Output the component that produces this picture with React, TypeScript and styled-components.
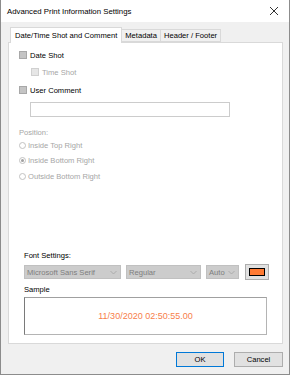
import React from 'react';
import styled, { createGlobalStyle } from 'styled-components';

const GlobalStyle = createGlobalStyle`
  html, body {
    margin: 0;
    padding: 0;
    background: #ffffff;
  }
  * {
    box-sizing: border-box;
  }
`;

const Window = styled.div`
  width: 290px;
  height: 375px;
  display: flex;
  flex-direction: column;
  border: 1px solid #8c8c8c;
  border-top: none;
  font-family: "Liberation Sans", Arial, sans-serif;
  font-size: 7.6px;
  color: #000;
  background: #f0f0f0;
`;

const TitleBar = styled.div`
  height: 22px;
  background: #ffffff;
  display: flex;
  align-items: center;
  justify-content: space-between;
  padding: 0 6px 0 6px;
  font-size: 7.8px;
`;

const CloseButton = styled.div`
  width: 14px;
  height: 14px;
  display: flex;
  align-items: center;
  justify-content: center;
  margin-right: 2px;
`;

const Body = styled.div`
  flex: 1;
  display: flex;
  flex-direction: column;
  padding: 4px 6px 0 7px;
`;

const TabStrip = styled.div`
  display: flex;
  align-items: flex-end;
  height: 16px;
  padding-left: 2px;
`;

const Tab = styled.div<{ $active?: boolean }>`
  height: ${(p) => (p.$active ? '16px' : '13px')};
  padding: 0 ${(p) => (p.$active ? '4px' : '3px')};
  display: flex;
  align-items: center;
  background: ${(p) => (p.$active ? '#ffffff' : '#f0f0f0')};
  border: 1px solid #d9d9d9;
  border-bottom: ${(p) => (p.$active ? 'none' : '1px solid #d9d9d9')};
  margin-left: ${(p) => (p.$active ? '0' : '-1px')};
  position: relative;
  z-index: ${(p) => (p.$active ? 1 : 0)};
  margin-bottom: ${(p) => (p.$active ? '-1px' : '0')};
`;

const Panel = styled.div`
  height: 302px;
  background: #ffffff;
  border: 1px solid #d9d9d9;
  display: flex;
  flex-direction: column;
  padding: 7px 0 0 10px;
`;

const CheckRow = styled.div<{ $indent?: boolean; $disabled?: boolean; $top?: number }>`
  display: flex;
  align-items: center;
  gap: 3px;
  height: 10px;
  margin-left: ${(p) => (p.$indent ? '12px' : '0')};
  margin-top: ${(p) => p.$top ?? 0}px;
  color: ${(p) => (p.$disabled ? '#a6a6a6' : '#000')};
`;

const CheckBox = styled.span<{ $disabled?: boolean }>`
  width: 8px;
  height: 8px;
  background: ${(p) => (p.$disabled ? '#e6e6e6' : '#c4c4c4')};
  border: 1px solid ${(p) => (p.$disabled ? '#d0d0d0' : '#a8a8a8')};
`;

const TextInput = styled.div`
  width: 200px;
  height: 15px;
  margin: 7px 0 0 11px;
  border: 1px solid #cccccc;
  background: #ffffff;
`;

const SectionLabel = styled.div<{ $disabled?: boolean; $top?: number }>`
  margin-top: ${(p) => p.$top ?? 0}px;
  color: ${(p) => (p.$disabled ? '#a6a6a6' : '#000')};
`;

const RadioGroup = styled.div`
  display: flex;
  flex-direction: column;
  margin-top: 3px;
`;

const RadioRow = styled.div<{ $gap: number }>`
  display: flex;
  align-items: center;
  gap: 2px;
  height: 10px;
  margin-top: ${(p) => p.$gap}px;
  color: #a6a6a6;
`;

const Radio = styled.span<{ $checked?: boolean }>`
  width: 7px;
  height: 7px;
  border-radius: 50%;
  border: 1px solid #c2c2c2;
  background: #ffffff;
  display: flex;
  align-items: center;
  justify-content: center;
  &::after {
    content: '';
    width: 3px;
    height: 3px;
    border-radius: 50%;
    background: ${(p) => (p.$checked ? '#a0a0a0' : 'transparent')};
  }
`;

const FontBlock = styled.div`
  margin-top: auto;
  padding: 0 0 8px 5px;
  display: flex;
  flex-direction: column;
`;

const FontRow = styled.div`
  display: flex;
  align-items: center;
  gap: 5px;
  margin-top: 4px;
`;

const Select = styled.div<{ $w: number }>`
  width: ${(p) => p.$w}px;
  height: 14px;
  background: #cccccc;
  border: 1px solid #c0c0c0;
  color: #7d7d7d;
  display: flex;
  align-items: center;
  justify-content: space-between;
  padding: 0 3px 0 2px;
`;

const ColorButton = styled.div`
  width: 24px;
  height: 16px;
  margin-left: 1px;
  background: #e1e1e1;
  border: 1px solid #adadad;
  display: flex;
  align-items: center;
  justify-content: center;
`;

const Swatch = styled.span`
  width: 16px;
  height: 8px;
  background: #ff7a33;
  border: 1px solid #000;
`;

const SampleLabel = styled.div`
  margin-top: 5px;
`;

const SampleBox = styled.div`
  width: 243px;
  height: 38px;
  margin-top: 3px;
  border: 1px solid #b4b4b4;
  border-left-color: #7a7a7a;
  border-top-color: #a0a0a0;
  display: flex;
  align-items: center;
  justify-content: center;
  color: #f7804a;
  font-size: 9px;
`;

const Footer = styled.div`
  flex: 1;
  display: flex;
  justify-content: flex-end;
  align-items: flex-start;
  gap: 10px;
  padding: 8px 0 0 0;
`;

const Button = styled.div<{ $primary?: boolean }>`
  width: ${(p) => (p.$primary ? '48px' : '49px')};
  height: 15px;
  background: #e1e1e1;
  border: 1px solid ${(p) => (p.$primary ? '#0078d7' : '#adadad')};
  display: flex;
  align-items: center;
  justify-content: center;
`;

function Chevron() {
  return (
    <svg width="7" height="5" viewBox="0 0 7 5">
      <path d="M0.5 1 L3.5 4 L6.5 1" fill="none" stroke="#a8a8a8" strokeWidth="0.9" />
    </svg>
  );
}

export default function App() {
  return (
    <>
      <GlobalStyle />
      <Window>
        <TitleBar>
          <span>Advanced Print Information Settings</span>
          <CloseButton>
            <svg width="10" height="10" viewBox="0 0 10 10">
              <path d="M1 1 L9 9 M9 1 L1 9" stroke="#333" strokeWidth="1" />
            </svg>
          </CloseButton>
        </TitleBar>
        <Body>
          <TabStrip>
            <Tab $active>Date/Time Shot and Comment</Tab>
            <Tab>Metadata</Tab>
            <Tab>Header / Footer</Tab>
          </TabStrip>
          <Panel>
            <CheckRow>
              <CheckBox />
              <span>Date Shot</span>
            </CheckRow>
            <CheckRow $indent $disabled $top={7}>
              <CheckBox $disabled />
              <span>Time Shot</span>
            </CheckRow>
            <CheckRow $top={8}>
              <CheckBox />
              <span>User Comment</span>
            </CheckRow>
            <TextInput />
            <SectionLabel $disabled $top={11}>Position:</SectionLabel>
            <RadioGroup>
              <RadioRow $gap={0}>
                <Radio />
                <span>Inside Top Right</span>
              </RadioRow>
              <RadioRow $gap={5}>
                <Radio $checked />
                <span>Inside Bottom Right</span>
              </RadioRow>
              <RadioRow $gap={6}>
                <Radio />
                <span>Outside Bottom Right</span>
              </RadioRow>
            </RadioGroup>
            <FontBlock>
              <SectionLabel>Font Settings:</SectionLabel>
              <FontRow>
                <Select $w={97}>
                  <span>Microsoft Sans Serif</span>
                  <Chevron />
                </Select>
                <Select $w={75}>
                  <span>Regular</span>
                  <Chevron />
                </Select>
                <Select $w={33}>
                  <span>Auto</span>
                  <Chevron />
                </Select>
                <ColorButton>
                  <Swatch />
                </ColorButton>
              </FontRow>
              <SampleLabel>Sample</SampleLabel>
              <SampleBox>11/30/2020 02:50:55.00</SampleBox>
            </FontBlock>
          </Panel>
          <Footer>
            <Button $primary>OK</Button>
            <Button>Cancel</Button>
          </Footer>
        </Body>
      </Window>
    </>
  );
}
